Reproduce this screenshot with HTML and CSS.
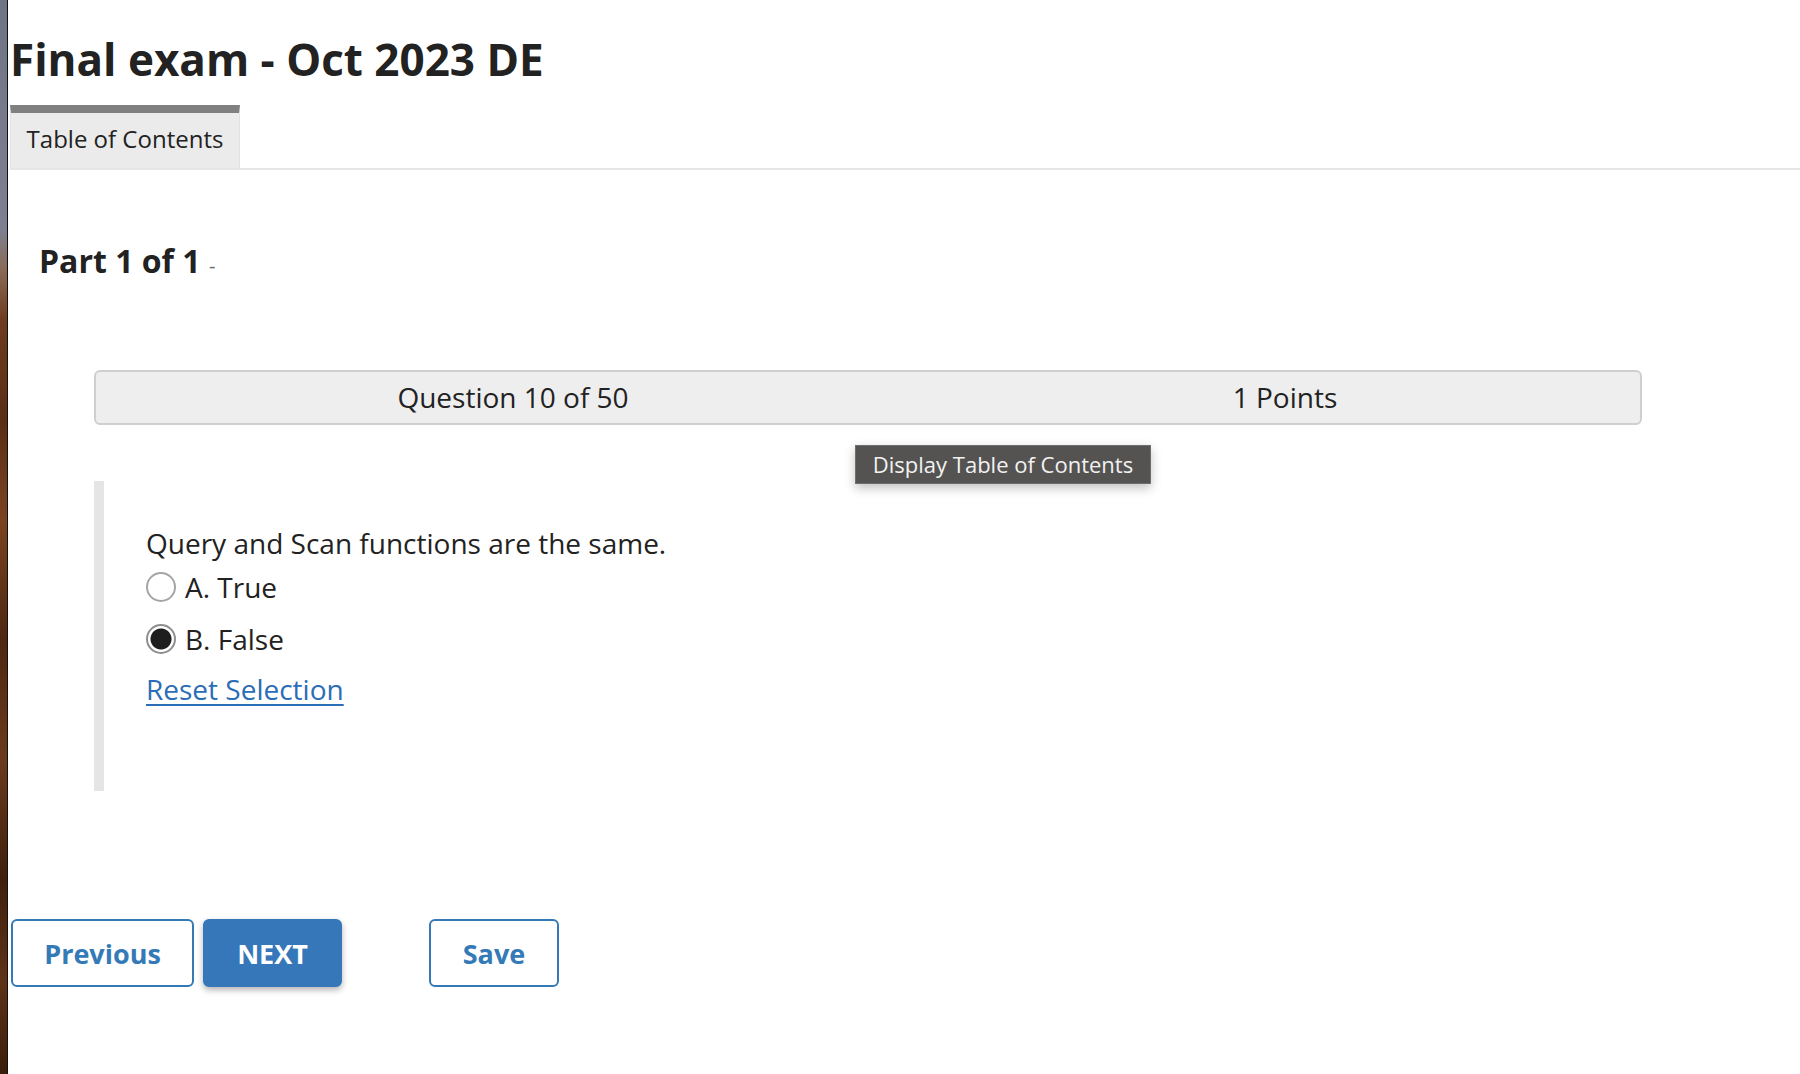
FILE: index.html
```html
<!DOCTYPE html>
<html lang="en">
<head>
<meta charset="utf-8">
<title>Final exam - Oct 2023 DE</title>
<link rel="stylesheet" href="styles.css">
</head>
<body>
<div class="screen">
  <div class="desk"></div>
  <main class="window">
    <h1 class="title">Final exam - Oct 2023 DE</h1>
    <nav class="tabs">
      <div class="tab">Table of Contents</div>
    </nav>
    <h2 class="part">Part 1 of 1 <span class="dash">-</span></h2>
    <div class="qbar">
      <div class="qcell">Question 10 of 50</div>
      <div class="qcell">1 Points</div>
    </div>
    <div class="tooltip">Display Table of Contents</div>
    <section class="qpanel">
      <p class="qtext">Query and Scan functions are the same.</p>
      <div class="options">
        <label class="opt"><span class="radio"></span><span>A. True</span></label>
        <label class="opt"><span class="radio checked"></span><span>B. False</span></label>
      </div>
      <a class="reset" href="#">Reset Selection</a>
    </section>
    <div class="actions">
      <button class="btn btn-prev">Previous</button>
      <button class="btn btn-next">NEXT</button>
      <button class="btn btn-save">Save</button>
    </div>
  </main>
</div>
</body>
</html>
```
FILE: styles.css
```css
html, body {
  margin: 0;
  padding: 0;
  background: #fff;
}
body {
  font-family: "Open Sans", "Noto Sans", sans-serif;
  color: #222;
}
.screen {
  display: flex;
  min-height: 1074px;
}
.desk {
  width: 7px;
  flex: none;
  background: linear-gradient(180deg, #6f7484 0px, #7d8090 230px, #8a6a55 270px, #6e3c1e 320px, #5a2e14 420px, #7a4422 520px, #4e2810 640px, #6b3a1c 760px, #3f200d 880px, #5e3318 980px, #3a1d0b 1074px);
}
.window {
  flex: 1;
  position: relative;
  border-left: 1px solid #111;
  padding-left: 2px;
  background: #fff;
}
.title {
  margin: 0;
  padding-top: 32px;
  font-size: 44px;
  line-height: 54px;
  font-weight: 700;
  color: #222;
}
.tabs {
  display: flex;
  margin-top: 19px;
  border-bottom: 2px solid #e6e6e6;
}
.tab {
  width: 228px;
  height: 55px;
  border-top: 8px solid #808080;
  border-left: 1px solid #e2e2e2;
  border-right: 1px solid #e2e2e2;
  background: #ebebeb;
  font-size: 24px;
  line-height: 52px;
  text-align: center;
  color: #222;
}
.part {
  margin: 71px 0 0 29px;
  font-size: 32px;
  line-height: 40px;
  font-weight: 700;
  color: #222;
}
.dash {
  font-size: 20px;
  font-weight: 400;
  color: #666;
}
.qbar {
  display: flex;
  margin: 84px 158px 0 84px;
  height: 51px;
  border: 2px solid #cfcfcf;
  border-radius: 6px;
  background: #eeeeee;
}
.qcell {
  flex: 1;
  padding-left: 62px;
  text-align: center;
  font-size: 28px;
  line-height: 51px;
  color: #222;
}
.tooltip {
  position: absolute;
  left: 847px;
  top: 445px;
  width: 296px;
  height: 39px;
  box-sizing: border-box;
  border: 1px solid #6e6e6e;
  background: #555351;
  color: #f2f2f2;
  font-size: 22px;
  line-height: 37px;
  text-align: center;
  box-shadow: 0 4px 10px rgba(0, 0, 0, 0.25);
}
.qpanel {
  margin: 56px 0 0 84px;
  height: 267px;
  padding: 43px 0 0 42px;
  border-left: 10px solid #e5e5e5;
}
.qtext {
  margin: 0;
  font-size: 28px;
  line-height: 38px;
}
.options {
  display: flex;
  flex-direction: column;
  gap: 6px;
  margin-top: 2px;
}
.opt {
  display: flex;
  align-items: center;
  height: 46px;
  font-size: 28px;
  gap: 9px;
}
.radio {
  width: 30px;
  height: 30px;
  box-sizing: border-box;
  border: 2px solid #a5a5a5;
  border-radius: 50%;
  background: #fff;
  flex: none;
}
.radio.checked {
  border-color: #8e8e8e;
  background: radial-gradient(circle, #1e1e1e 0, #1e1e1e 10px, #fff 11px);
}
.reset {
  display: inline-block;
  margin-top: 8px;
  font-size: 28px;
  line-height: 38px;
  color: #2b6db6;
  text-decoration: underline;
  text-underline-offset: 4px;
  text-decoration-thickness: 2px;
}
.actions {
  display: flex;
  align-items: center;
  margin: 128px 0 0 1px;
}
.btn {
  height: 68px;
  box-sizing: border-box;
  font-family: "Open Sans", "Noto Sans", sans-serif;
  font-size: 27px;
  font-weight: 700;
  border: 2px solid #337ab7;
  border-radius: 6px;
  background: #fff;
  color: #337ab7;
  padding: 0;
}
.btn-prev {
  width: 183px;
}
.btn-next {
  width: 139px;
  margin-left: 9px;
  background: #3577b9;
  border-color: #3577b9;
  color: #fff;
  box-shadow: 0 3px 6px rgba(0, 0, 0, 0.3);
}
.btn-save {
  width: 130px;
  margin-left: 87px;
}
```
